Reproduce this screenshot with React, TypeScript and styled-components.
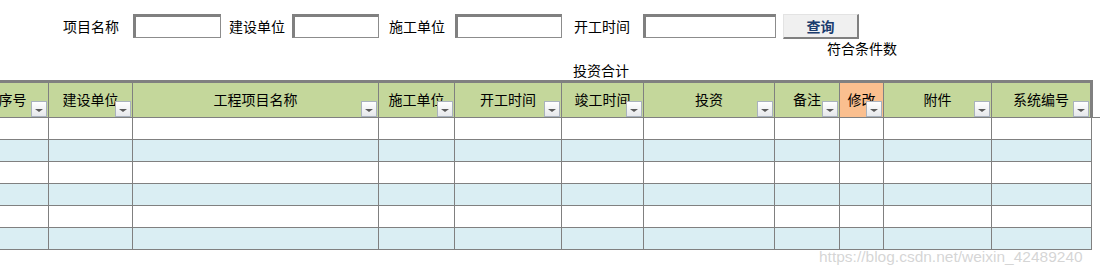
import styled, { createGlobalStyle } from "styled-components";

const GlobalStyle = createGlobalStyle`
  html, body {
    margin: 0;
    padding: 0;
    background: #ffffff;
    overflow: hidden;
  }
  body {
    font-family: "Noto Sans CJK SC", "Noto Sans", sans-serif;
    font-size: 14px;
    color: #000000;
  }
`;

// Column setup, widths in px (first column is cut off at the left edge)
const columns = [
  { title: "序号", width: 72 },
  { title: "建设单位", width: 84 },
  { title: "工程项目名称", width: 246 },
  { title: "施工单位", width: 76 },
  { title: "开工时间", width: 107 },
  { title: "竣工时间", width: 82 },
  { title: "投资", width: 131 },
  { title: "备注", width: 65 },
  { title: "修改", width: 44, accent: true },
  { title: "附件", width: 108 },
  { title: "系统编号", width: 100 },
];

const rowCount = 6;

const filters = [
  { label: "项目名称", width: 88, gap: 14, lead: 0 },
  { label: "建设单位", width: 87, gap: 7, lead: 8 },
  { label: "施工单位", width: 107, gap: 10, lead: 10 },
  { label: "开工时间", width: 133, gap: 13, lead: 12 },
];

const App = () => (
  <Page>
    <GlobalStyle />
    <Toolbar>
      {filters.map((f) => (
        <Field key={f.label} $lead={f.lead} $gap={f.gap}>
          <Label>{f.label}</Label>
          <TextInput $width={f.width} />
        </Field>
      ))}
      <QueryButton>查询</QueryButton>
    </Toolbar>

    <CountLine>符合条件数</CountLine>
    <TotalLine>投资合计</TotalLine>

    <Sheet>
      <Grid>
        <colgroup>
          {columns.map((c) => (
            <col key={c.title} style={{ width: c.width }} />
          ))}
          <col style={{ width: 30 }} />
        </colgroup>
        <thead>
          <tr>
            {columns.map((c) => (
              <HeadCell key={c.title} $accent={c.accent}>
                <HeadInner>
                  {c.title}
                  <FilterButton>
                    <Caret />
                  </FilterButton>
                </HeadInner>
              </HeadCell>
            ))}
            <TailHead />
          </tr>
        </thead>
        <tbody>
          {Array.from({ length: rowCount }).map((_, i) => (
            <tr key={i}>
              {columns.map((c) => (
                <Cell key={c.title} $striped={i % 2 === 1} />
              ))}
              <TailCell />
            </tr>
          ))}
        </tbody>
      </Grid>
    </Sheet>

    <Watermark>https://blog.csdn.net/weixin_42489240</Watermark>
  </Page>
);

// Styled Components
const Page = styled.div`
  position: relative;
  width: 1100px;
  height: 272px;
  overflow: hidden;
  padding-top: 14px;
  box-sizing: border-box;
`;

const Toolbar = styled.div`
  display: flex;
  align-items: flex-start;
  padding-left: 63px;
  height: 25px;
`;

const Field = styled.div<{ $lead: number; $gap: number }>`
  display: flex;
  align-items: center;
  gap: ${({ $gap }) => $gap}px;
  margin-left: ${({ $lead }) => $lead}px;
  height: 24px;
`;

const Label = styled.span`
  font-size: 14px;
  line-height: 16px;
  white-space: nowrap;
`;

const TextInput = styled.input`
  box-sizing: border-box;
  width: ${({ $width }: { $width: number }) => $width}px;
  height: 24px;
  margin: 0;
  padding: 0 3px;
  background: #ffffff;
  border-style: solid;
  border-width: 3px 1px 1px 3px;
  border-color: #808080 #8c8c8c #8c8c8c #808080;
  outline: none;
`;

const QueryButton = styled.button`
  box-sizing: border-box;
  width: 76px;
  height: 25px;
  margin-left: 7px;
  padding: 0;
  background: #f0f0f0;
  border-style: solid;
  border-width: 1px 2px 2px 1px;
  border-color: #e3e3e3 #808080 #808080 #e3e3e3;
  font-family: "Noto Sans CJK SC", sans-serif;
  font-size: 14px;
  font-weight: 700;
  line-height: 20px;
  color: #1b3c6e;
`;

const CountLine = styled.div`
  margin-top: 1px;
  padding-left: 827px;
  line-height: 16px;
  white-space: nowrap;
`;

const TotalLine = styled.div`
  margin-top: 6px;
  padding-left: 573px;
  line-height: 16px;
  white-space: nowrap;
`;

const Sheet = styled.div`
  margin-top: 2px;
  margin-left: -24px;
`;

const Grid = styled.table`
  border-collapse: collapse;
  table-layout: fixed;
  width: 1145px;
`;

const HeadCell = styled.th<{ $accent?: boolean }>`
  height: 34px;
  padding: 0;
  background: ${({ $accent }) => ($accent ? "#fabf8f" : "#c4d79b")};
  border: 1px solid #808080;
  border-top: 3px solid #808080;
  font-weight: 400;
  font-size: 14px;
  white-space: nowrap;
  vertical-align: middle;

  &:nth-last-child(2) {
    border-right: 3px solid #808080;
  }
`;

const HeadInner = styled.div`
  position: relative;
  height: 34px;
  line-height: 32px;
  text-align: center;
`;

const FilterButton = styled.span`
  position: absolute;
  right: 1px;
  bottom: 0;
  box-sizing: border-box;
  width: 16px;
  height: 16px;
  border: 1px solid #a9b2bd;
  background: linear-gradient(#ffffff, #e6e8eb);
  display: flex;
  align-items: center;
  justify-content: center;
`;

const Caret = styled.span`
  width: 0;
  height: 0;
  margin-top: 2px;
  border-left: 4px solid transparent;
  border-right: 4px solid transparent;
  border-top: 3px solid #5a5a5a;
`;

const TailHead = styled.th`
  padding: 0;
  border: none;
  border-bottom: 1px solid #808080;
`;

const Cell = styled.td<{ $striped: boolean }>`
  height: 21px;
  padding: 0;
  background: ${({ $striped }) => ($striped ? "#daeef3" : "#ffffff")};
  border: 1px solid #808080;
`;

const TailCell = styled.td`
  padding: 0;
  border: none;
`;

const Watermark = styled.div`
  position: absolute;
  left: 819px;
  top: 248px;
  font-family: "Liberation Sans", Arial, sans-serif;
  font-size: 15.5px;
  color: rgba(195, 195, 195, 0.7);
  white-space: nowrap;
  pointer-events: none;
`;

export default App;
